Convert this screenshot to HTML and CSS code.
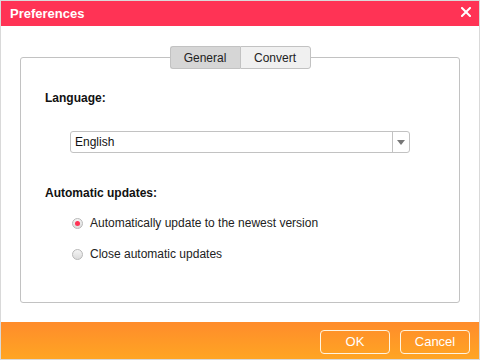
FILE: index.html
```html
<!DOCTYPE html>
<html lang="en">
<head>
  <meta charset="UTF-8">
  <title>Preferences</title>
  <link rel="stylesheet" href="styles.css">
</head>
<body>

<div class="ventana">
  <div class="titulo">
    <span class="titulo-texto">Preferences</span>
    <span class="cerrar">
      <svg width="10" height="10" viewBox="0 0 10 10">
        <path d="M1 1 L9 9 M9 1 L1 9" stroke="#fff" stroke-width="2" stroke-linecap="square"/>
      </svg>
    </span>
  </div>

  <div class="contenido">
    <div class="pestanas">
      <div class="pestana activa">General</div>
      <div class="pestana">Convert</div>
    </div>

    <div class="panel">
      <div class="etiqueta">Language:</div>
      <div class="selector">
        <span class="selector-valor">English</span>
        <span class="selector-flecha"></span>
      </div>

      <div class="etiqueta etiqueta-updates">Automatic updates:</div>
      <div class="opcion">
        <span class="radio marcado"></span>
        <span>Automatically update to the newest version</span>
      </div>
      <div class="opcion opcion-2">
        <span class="radio"></span>
        <span>Close automatic updates</span>
      </div>
    </div>
  </div>

  <div class="pie">
    <button class="boton">OK</button>
    <button class="boton">Cancel</button>
  </div>
</div>

</body>
</html>
```

FILE: styles.css
```css
/* Ventana de preferencias */
body {
  margin: 0;
  font-family: "Liberation Sans", Arial, sans-serif;
  font-size: 12px;
  color: #111;
}
.ventana {
  width: 480px;
  height: 360px;
  box-sizing: border-box;
  border: 1px solid #d9d9d9;
  display: flex;
  flex-direction: column;
  background: #fff;
}
.titulo {
  height: 25px;
  background: #ff3355;
  display: flex;
  align-items: center;
  justify-content: space-between;
  padding: 0 8px 0 9px;
  flex-shrink: 0;
}
.titulo-texto {
  color: #fff;
  font-weight: bold;
  font-size: 13px;
}
.cerrar {
  display: flex;
  margin-top: -4px;
}
.contenido {
  flex: 1;
  padding: 20px 19px 19px 19px;
  display: flex;
  flex-direction: column;
}
.pestanas {
  display: flex;
  justify-content: center;
  position: relative;
  z-index: 1;
  margin-bottom: -12px;
}
.pestana {
  width: 69px;
  height: 21px;
  line-height: 22px;
  text-align: center;
  background: #f0f0f0;
  border: 1px solid #c2c2c2;
  color: #222;
}
.pestana:first-child {
  border-radius: 3px 0 0 3px;
  border-right: none;
}
.pestana:last-child {
  border-radius: 0 3px 3px 0;
}
.pestana.activa {
  background: #d6d6d6;
}
.panel {
  flex: 1;
  border: 1px solid #c2c2c2;
  border-radius: 3px;
  padding: 33px 24px 0 24px;
}
.etiqueta {
  font-weight: bold;
  line-height: 14px;
}
.selector {
  margin: 26px 0 0 25px;
  width: 338px;
  height: 20px;
  border: 1px solid #c2c2c2;
  border-radius: 3px;
  display: flex;
  align-items: center;
}
.selector-valor {
  flex: 1;
  padding-left: 4px;
}
.selector-flecha {
  width: 16px;
  height: 20px;
  border-left: 1px solid #c2c2c2;
  display: flex;
  align-items: center;
  justify-content: center;
}
.selector-flecha::after {
  content: "";
  border-left: 4px solid transparent;
  border-right: 4px solid transparent;
  border-top: 5px solid #777;
}
.etiqueta-updates {
  margin-top: 33px;
}
.opcion {
  display: flex;
  align-items: center;
  gap: 7px;
  line-height: 14px;
  margin: 16px 0 0 27px;
  color: #222;
}
.opcion-2 {
  margin-top: 17px;
}
.radio {
  width: 9px;
  height: 9px;
  border: 1px solid #b8b8b8;
  border-radius: 50%;
  background: linear-gradient(#f4f4f4, #dcdcdc);
  display: flex;
  align-items: center;
  justify-content: center;
}
.radio.marcado::after {
  content: "";
  width: 5px;
  height: 5px;
  border-radius: 50%;
  background: #ff3355;
}
.pie {
  height: 37px;
  flex-shrink: 0;
  background: linear-gradient(#ff8c2b, #ffa523);
  display: flex;
  justify-content: flex-end;
  align-items: center;
  gap: 10px;
  padding-right: 9px;
}
.boton {
  width: 70px;
  height: 24px;
  background: transparent;
  border: 1px solid #fff4e0;
  border-radius: 4px;
  color: #fff;
  font-family: "Liberation Sans", Arial, sans-serif;
  font-size: 13px;
  margin-top: 2px;
}
```
